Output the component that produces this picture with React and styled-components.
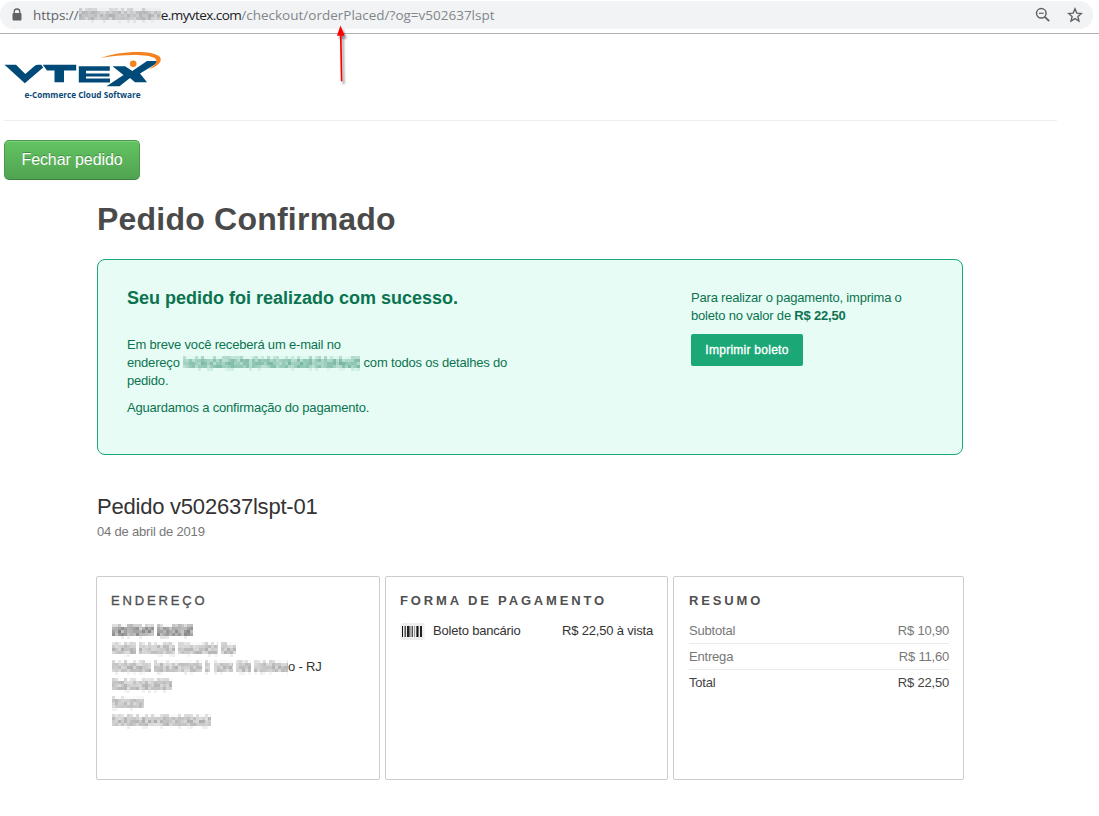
import React from "react";
import styled, { createGlobalStyle } from "styled-components";

const GlobalStyle = createGlobalStyle`
  * { box-sizing: border-box; }
  body {
    margin: 0;
    background: #fff;
    color: #333;
    font: 13px/18px "Liberation Sans", Arial, sans-serif;
    letter-spacing: -0.19px;
  }
  h1, h2, h3, p { margin: 0; }
`;

const Page = styled.div`
  position: relative;
  width: 1099px;
  height: 816px;
  overflow: hidden;
`;

const BrowserBar = styled.div`
  height: 34px;
  padding-top: 1px;
  border-bottom: 1px solid #b1b1b3;
`;

const AddressField = styled.div`
  display: flex;
  align-items: center;
  width: 1093px;
  height: 28px;
  padding: 0 10px;
  border-radius: 14px;
  background: #f1f3f4;
`;

const Url = styled.div`
  display: flex;
  align-items: center;
  flex: 1;
  height: 28px;
  margin-left: 9px;
  font: 13.5px/28px "Open Sans", "Noto Sans", sans-serif;
  white-space: pre;
`;

const UrlPart = styled.span`
  color: ${(p) => p.$color};
  letter-spacing: ${(p) => p.$spacing}px;
`;

const BarIcon = styled.svg`
  display: block;
  flex: none;
  margin-left: ${(p) => p.$gap || 0}px;
`;

const Pointer = styled.svg`
  position: absolute;
  left: 330px;
  top: 22px;
  filter: drop-shadow(2.5px 3px 1.2px rgba(0, 0, 0, 0.45));
`;

const Header = styled.header`
  width: 1053px;
  height: 87px;
  margin-left: 4px;
  padding-top: 16px;
  border-bottom: 1px solid #eee;
`;

const Logo = styled.svg`
  display: block;
`;

const CloseOrder = styled.button`
  display: block;
  width: 136px;
  height: 40px;
  margin: 19px 0 0 4px;
  padding: 0;
  border: 1px solid #4a9a4a;
  border-bottom-color: #3b823b;
  border-radius: 5px;
  background: linear-gradient(#62c462, #51a351);
  box-shadow: inset 0 1px 0 rgba(255, 255, 255, 0.2);
  color: #fff;
  font: 16px/20px "Liberation Sans", Arial, sans-serif;
  letter-spacing: -0.1px;
  text-shadow: 0 -1px 0 rgba(0, 0, 0, 0.25);
`;

const Main = styled.main`
  width: 868px;
  margin: 18px 0 0 96px;
`;

const Title = styled.h1`
  margin-left: 1px;
  color: #4a4a4a;
  font-size: 32px;
  line-height: 42px;
  letter-spacing: 0.22px;
`;

const Notice = styled.section`
  display: flex;
  width: 866px;
  height: 196px;
  margin: 19px 0 0 1px;
  padding: 28px 29px;
  border: 1px solid #1ba876;
  border-radius: 8px;
  background: #e6fcf5;
  color: #0c7350;
`;

const NoticeMessage = styled.div`
  width: 564px;
`;

const NoticeTitle = styled.h2`
  margin-bottom: 28px;
  font-size: 18px;
  line-height: 20px;
  letter-spacing: 0;
`;

const Paragraph = styled.p`
  margin-bottom: 9px;
`;

const Payment = styled.div`
  width: 240px;
  padding-top: 1px;
`;

const PrintButton = styled.button`
  width: 112px;
  height: 32px;
  padding: 0;
  border: 0;
  border-radius: 2px;
  background: #1ba876;
  color: #fff;
  font: 12px/18px "Liberation Sans", Arial, sans-serif;
  letter-spacing: 0.26px;
  -webkit-text-stroke: 0.35px #fff;
`;

const OrderTitle = styled.h2`
  margin: 38px 0 0 1px;
  color: #333;
  font-size: 22px;
  font-weight: 400;
  line-height: 28px;
  letter-spacing: -0.22px;
`;

const OrderDate = styled.p`
  margin: 2px 0 0 1px;
  color: #777;
`;

const Cards = styled.div`
  display: grid;
  grid-template-columns: 284px 283px 291px;
  gap: 5px;
  margin-top: 35px;
`;

const Card = styled.section`
  height: 204px;
  padding: 15px 14px 0 ${(p) => p.$inset || 14}px;
  border: 1px solid #ccc;
  border-radius: 2px;
`;

const CardTitle = styled.h3`
  margin-bottom: 12px;
  color: #505050;
  font-size: 13px;
  font-weight: ${(p) => (p.$light ? 400 : 700)};
  line-height: 18px;
  letter-spacing: 2.85px;
  -webkit-text-stroke: ${(p) => (p.$light ? "0.35px #505050" : "0")};
  white-space: nowrap;
`;

const AddressLine = styled.div`
  display: flex;
  align-items: center;
  height: 18px;
  padding-left: 1px;
  white-space: pre;
`;

const PaymentRow = styled.div`
  display: flex;
  align-items: center;
  height: 18px;
`;

const Barcode = styled.svg`
  display: block;
  margin-right: 8px;
`;

const PaymentValue = styled.span`
  margin-left: auto;
`;

const Summary = styled.div`
  display: grid;
  grid-template-rows: 22px 26px 26px;
`;

const SummaryRow = styled.div`
  display: flex;
  align-items: flex-end;
  justify-content: space-between;
  padding-bottom: 3px;
  border-bottom: 1px solid ${(p) => (p.$last ? "transparent" : "#eaeaea")};
  color: ${(p) => (p.$last ? "#444" : "#777")};
`;

const MosaicSvg = styled.svg`
  display: inline-block;
  flex: none;
  vertical-align: -4px;
`;

/* Privacy mask: coarse cells laid out as words, carrying no readable text. */
const CELL = 3;
const ROW_ALPHA = [0.26, 0.4, 0.46, 0.42, 0.1];

function Mosaic({ words, color = "#333", seed = 1, strength = 1 }) {
  let state = seed * 7919;
  const next = () => {
    state = (state * 1103515245 + 12345) % 2147483648;
    return state / 2147483648;
  };
  const cells = [];
  let x = 0;
  words.forEach((width) => {
    if (width < 0) {
      x -= width;
      return;
    }
    for (let c = 0; c < width; c += CELL) {
      ROW_ALPHA.forEach((alpha, row) => {
        const value = alpha * (0.55 + next() * 0.7) * strength;
        const lifted = row === 0 && c > 0 && next() > 0.5 ? 0.15 : 1;
        const dropped = row === 4 && next() > 0.3 ? 0 : 1;
        cells.push(
          <rect
            key={x + c + "-" + row}
            x={x + c}
            y={row * CELL}
            width={Math.min(CELL, width - c)}
            height={CELL}
            fill={color}
            opacity={value * lifted * dropped}
          />
        );
      });
    }
    x += width;
  });
  return (
    <MosaicSvg width={x} height="15" shapeRendering="crispEdges" aria-hidden="true">
      {cells}
    </MosaicSvg>
  );
}

const BARS = [
  [2, 1, "#111"], [4, 1, "#999"], [5, 1, "#555"], [7, 2, "#222"], [9, 1, "#777"],
  [10, 2, "#aaa"], [12, 1, "#555"], [14, 1, "#999"], [16, 1, "#666"], [17, 1, "#111"],
  [18, 1, "#777"], [20, 2, "#222"],
];

export default function App() {
  return (
    <Page>
      <GlobalStyle />
      <BrowserBar>
        <AddressField>
          <BarIcon width="14" height="14" viewBox="0 0 14 14">
            <path d="M4.200 5.500V3.800a2.800 2.800 0 0 1 5.600 0v1.700" fill="none" stroke="#5f6368" strokeWidth="1.300" />
            <rect x="2.500" y="5" width="9" height="7.500" rx="1" fill="#5f6368" />
          </BarIcon>
          <Url>
            <UrlPart $color="#5f6368" $spacing={-0.05}>https://</UrlPart>
            <Mosaic words={[82]} color="#444" seed={3} strength={0.7} />
            <UrlPart $color="#202124" $spacing={-0.55}>e.myvtex.com</UrlPart>
            <UrlPart $color="#80868b" $spacing={0}>/checkout/orderPlaced/?og=v502637lspt</UrlPart>
          </Url>
          <BarIcon width="16" height="16" viewBox="0 0 16 16" fill="none" stroke="#5f6368">
            <circle cx="6.300" cy="6.300" r="4.800" strokeWidth="1.500" />
            <path d="M4 6.300h4.700" strokeWidth="1.200" />
            <path d="M9.800 9.800l4.400 4.400" strokeWidth="1.900" />
          </BarIcon>
          <BarIcon $gap={16} width="16" height="16" viewBox="0 0 16 16">
            <path d="M8 1.800l1.800 4.300 4.600.4-3.500 3 1.050 4.500L8 11.600 4.050 14 5.100 9.500l-3.500-3 4.600-.4z" fill="none" stroke="#5f6368" strokeWidth="1.400" />
          </BarIcon>
        </AddressField>
      </BrowserBar>

      <Header>
        <Logo width="158" height="51" viewBox="4 50 158 51">
          <path d="M4.500 64.700h11.500l9.300 9.300L34.500 66q1.500-1.300 3.500-1.300h3.200l2 2.800L24.800 83.200z" fill="#004a78" />
          <path d="M42.800 64.800H76.200V70.500H64V82.300H54.500V70.500H47z" fill="#004a78" />
          <path d="M78.800 66.300h31v4.400H86v2.700h23.500v3.200H86v1.800h24v4H78.800z" fill="#004a78" />
          <path d="M112.500 66.300h12.500l7.300 4.700L147 61h13.500L140 73.500l7 8.800h-12l-5-4.300-10.500 8.300h-13L123.500 75z" fill="#004a78" />
          <circle cx="133.200" cy="63.800" r="3.300" fill="#f58220" />
          <path d="M101 58C117 51.300 151 49.300 159.500 56.500c3.700 4-1 9.800-10.500 12.500 5.500-3.300 9.300-7.500 6.300-10.500C149 53.500 120 54.200 101 58z" fill="#f58220" />
          <text x="24.500" y="97.800" fill="#0b4a78" fontFamily="Open Sans, Noto Sans, sans-serif" fontSize="8.500" fontWeight="700" letterSpacing="0" textLength="116" lengthAdjust="spacingAndGlyphs">e-Commerce Cloud Software</text>
        </Logo>
      </Header>

      <CloseOrder>Fechar pedido</CloseOrder>

      <Main>
        <Title>Pedido Confirmado</Title>

        <Notice>
          <NoticeMessage>
            <NoticeTitle>Seu pedido foi realizado com sucesso.</NoticeTitle>
            <Paragraph>
              Em breve você receberá um e-mail no
              <br />
              endereço <Mosaic words={[177]} color="#0c7350" seed={5} strength={0.9} /> com todos os detalhes do
              <br />
              pedido.
            </Paragraph>
            <Paragraph>Aguardamos a confirmação do pagamento.</Paragraph>
          </NoticeMessage>
          <Payment>
            <Paragraph>
              Para realizar o pagamento, imprima o
              <br />
              boleto no valor de <b>R$ 22,50</b>
            </Paragraph>
            <PrintButton>Imprimir boleto</PrintButton>
          </Payment>
        </Notice>

        <OrderTitle>Pedido v502637lspt-01</OrderTitle>
        <OrderDate>04 de abril de 2019</OrderDate>

        <Cards>
          <Card>
            <CardTitle $light>ENDEREÇO</CardTitle>
            <AddressLine><Mosaic words={[42, -3, 36]} seed={7} strength={1.1} /></AddressLine>
            <AddressLine><Mosaic words={[24, -3, 36, -3, 40, -3, 15]} seed={11} strength={0.7} /></AddressLine>
            <AddressLine>
              <Mosaic words={[39, -3, 48, -3, 5, -4, 19, -3, 15, -3, 34]} seed={13} strength={0.7} />
              <span>o - RJ</span>
            </AddressLine>
            <AddressLine><Mosaic words={[60]} seed={17} strength={0.7} /></AddressLine>
            <AddressLine><Mosaic words={[32]} seed={19} strength={0.7} /></AddressLine>
            <AddressLine><Mosaic words={[99]} seed={23} strength={0.7} /></AddressLine>
          </Card>
          <Card>
            <CardTitle>FORMA DE PAGAMENTO</CardTitle>
            <PaymentRow>
              <Barcode width="25" height="17" viewBox="0 0 25 17">
                <rect x="0.500" width="24" height="17" rx="2" fill="#eee" />
                {BARS.map(([x, width, fill]) => (
                  <rect key={x} x={x} y="3" width={width} height="11" fill={fill} />
                ))}
              </Barcode>
              <span>Boleto bancário</span>
              <PaymentValue>R$ 22,50 à vista</PaymentValue>
            </PaymentRow>
          </Card>
          <Card $inset={15}>
            <CardTitle>RESUMO</CardTitle>
            <Summary>
              <SummaryRow><span>Subtotal</span><span>R$ 10,90</span></SummaryRow>
              <SummaryRow><span>Entrega</span><span>R$ 11,60</span></SummaryRow>
              <SummaryRow $last><span>Total</span><span>R$ 22,50</span></SummaryRow>
            </Summary>
          </Card>
        </Cards>
      </Main>

      <Pointer width="22" height="68" viewBox="330 22 22 68">
        <path d="M340.500 25.500l4.200 10.300h-3.100l.8 45.500h-1.600l-.9-45.500h-3z" fill="#f00" />
      </Pointer>
    </Page>
  );
}
